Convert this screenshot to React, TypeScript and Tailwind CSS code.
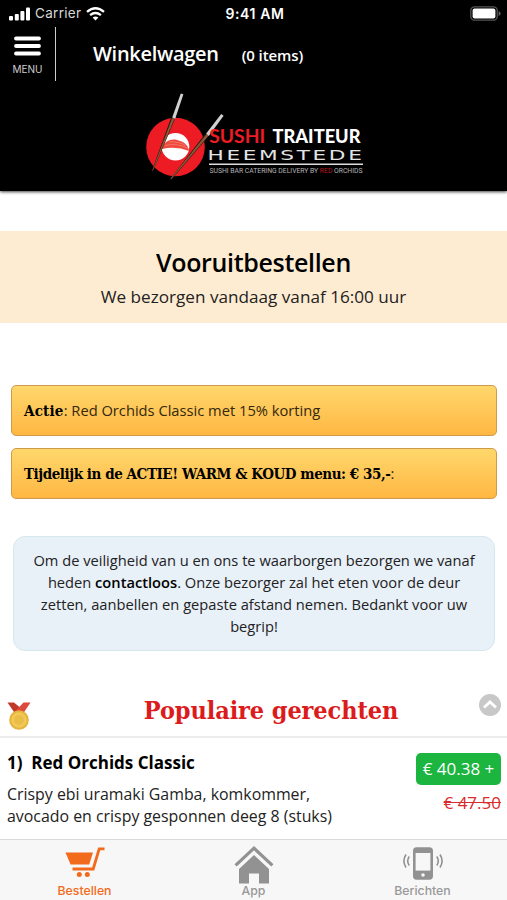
import { clsx } from "clsx";
import { ReactNode } from "react";

const tabs = [
  { id: "order", label: "Bestellen", icon: <CartIcon />, active: true },
  { id: "app", label: "App", icon: <HomeIcon />, active: false },
  { id: "messages", label: "Berichten", icon: <PhoneIcon />, active: false },
];

function CartIcon() {
  return (
    <svg width="40" height="31" viewBox="0 0 40 31" fill="#f26a1b">
      <path d="M0.5 5.5H28L24.2 17.5H5.6Z" />
      <path
        d="M39.5 1.9H34.2L28.2 22H7.5"
        fill="none"
        stroke="#f26a1b"
        strokeWidth="2.8"
      />
      <circle cx="14.3" cy="27.5" r="2.5" />
      <circle cx="22.3" cy="27.5" r="2.5" />
    </svg>
  );
}

function HomeIcon() {
  return (
    <svg className="mt-1" width="40" height="38" viewBox="0 0 40 38" fill="#929292">
      <path
        d="M1.6 19.3L20 2.2L38.4 19.3"
        fill="none"
        stroke="#929292"
        strokeWidth="3.2"
      />
      <path d="M20 9L35 23V37.5H25V27.5H15V37.5H5V23Z" />
    </svg>
  );
}

function PhoneIcon() {
  return (
    <svg className="mt-0.5" width="40" height="33" viewBox="0 0 40 33">
      <rect x="10" y="0.3" width="20" height="32.4" rx="3.6" fill="#929292" />
      <rect x="12.6" y="6" width="14.8" height="17.6" fill="#f7f7f7" />
      <circle cx="20" cy="28" r="1.8" fill="#f7f7f7" />
      <g fill="none" stroke="#929292" strokeWidth="1.6">
        <path d="M6.2 9.5Q3.2 14 6.2 18.5M3 7.5Q-1.2 14 3 20.5" />
        <path d="M33.8 9.5Q36.8 14 33.8 18.5M37 7.5Q41.2 14 37 20.5" />
      </g>
    </svg>
  );
}

function StatusBar() {
  return (
    <div className="grid h-[27px] grid-cols-3 items-center pl-[9px] pr-[6px] font-['Inter',sans-serif] text-[13.5px] leading-none">
      <div className="flex items-center">
        <svg width="22" height="14" viewBox="0 0 22 14" fill="#fff">
          <rect x="0" y="9" width="4" height="4.5" rx="1" />
          <rect x="5.8" y="7" width="4" height="6.5" rx="1" />
          <rect x="11.4" y="4" width="4" height="9.5" rx="1" />
          <rect x="17" y="0.5" width="4" height="13" rx="1" />
        </svg>
        <span className="ml-1 tracking-[0.3px] text-[#d8d8d8]">Carrier</span>
        <svg className="ml-[5px]" width="19" height="14" viewBox="0 0 19 14">
          <g fill="none" stroke="#fff" strokeWidth="2.3">
            <path d="M1 4.9Q9.5 -2.3 18 4.9" />
            <path d="M4.1 8.2Q9.5 3.8 14.9 8.2" />
          </g>
          <path d="M6.6 10.6Q9.5 8.3 12.4 10.6L9.5 13.6Z" fill="#fff" />
        </svg>
      </div>
      <span className="text-center text-[14px] font-semibold tracking-[0.6px]">9:41 AM</span>
      <svg className="justify-self-end" width="31" height="15" viewBox="0 0 31 15">
        <rect x="0.8" y="0.8" width="26.4" height="13.4" rx="3.6" fill="#000" stroke="#555" strokeWidth="1.3" />
        <rect x="2.6" y="2.6" width="22.8" height="9.8" rx="2" fill="#fff" />
        <path d="M28.6 5Q30.6 6 30.6 7.5T28.6 10Z" fill="#666" />
      </svg>
    </div>
  );
}

function Logo() {
  return (
    <svg className="ml-[143px] mt-[9px]" width="224" height="92" viewBox="143 91 224 92">
      <circle cx="175.5" cy="147" r="29.3" fill="#ed1c24" />
      <circle cx="175.5" cy="146.8" r="13.8" fill="#fff" />
      <path d="M161.8 149C164 141 171 138.5 177 140C184 141.5 188 145 189.2 151Q176 145.5 161.8 149Z" fill="#ee4a3e" />
      <path d="M165 145.5Q177 142.5 188.5 148.5M169 141.8Q179 141.5 186 145.5" fill="none" stroke="#f58476" strokeWidth="0.7" />
      {/* chopsticks: dark edge, wooden shaft, silver grip */}
      <path d="M171.2 117.5L175 118.8L152.8 171.5L151.8 171Z" fill="#2b1511" />
      <path d="M172.2 118L174.5 118.8L153 170.5L152.4 170.3Z" fill="#8a5a38" />
      <path d="M180.8 93.5L183.4 94.3L175.2 118.8L172.2 117.5Z" fill="#d0d0d0" />
      <path d="M205.5 133.5L208.8 136.3L171 180L170 179.3Z" fill="#2b1511" />
      <path d="M206.8 133.8L208.6 135.6L171.2 179.2L170.6 178.6Z" fill="#8a5a38" />
      <path d="M221.2 114L223.6 115.8L208.8 136L206.2 133.5Z" fill="#d0d0d0" />
      <text x="209.2" y="143.4" fontFamily="Lato, sans-serif" fontSize="19.4" fontWeight="700" fill="#ed1c24" textLength="56" lengthAdjust="spacingAndGlyphs">
        SUSHI
      </text>
      <text x="272.5" y="143.4" fontFamily="Lato, sans-serif" fontSize="19" fontWeight="900" fill="#fff" textLength="88" lengthAdjust="spacingAndGlyphs">
        TRAITEUR
      </text>
      <text x="207.5" y="159.8" fontFamily="DejaVu Sans, sans-serif" fontSize="14.8" letterSpacing="1.8" fill="#e4e4e4" textLength="157" lengthAdjust="spacingAndGlyphs">
        HEEMSTEDE
      </text>
      <path d="M209 164.3H363" stroke="#ddd" strokeWidth="1.4" />
      <text x="209.5" y="172.8" fontSize="6.8" fontFamily="Roboto, sans-serif" fill="#b5b5b5" textLength="153" lengthAdjust="spacing">
        SUSHI BAR CATERING DELIVERY BY <tspan fill="#b81820">RED</tspan> ORCHIDS
      </text>
    </svg>
  );
}

function Medal() {
  return (
    <svg width="24" height="28" viewBox="0 0 24 28">
      <path d="M0.5 0.5H7L16 8L13 12L8 11.5Z" fill="#c0392b" />
      <path d="M23.5 0.5H16.5L8.5 9L12 12L16.5 11Z" fill="#dc4a3c" />
      <circle cx="12" cy="18" r="9.8" fill="#e5b33c" />
      <circle cx="12" cy="18" r="7.8" fill="#f2c955" />
      <circle cx="12" cy="18" r="5" fill="#e9bd48" />
    </svg>
  );
}

function Promo({ children }: { children: ReactNode }) {
  return (
    <div className="flex h-[51px] items-center rounded-[5px] border border-[#cf9a4b] bg-linear-to-b from-[#ffd76b] to-[#ffb742] px-3 text-[#33280f]">
      <p className="whitespace-nowrap">{children}</p>
    </div>
  );
}

export default function App() {
  return (
    <div className="flex h-[900px] w-[507px] flex-col overflow-hidden bg-white font-['Open_Sans',sans-serif] text-[#222]">
      <header className="h-[191px] shrink-0 bg-black text-white shadow-[0_1px_3px_rgba(0,0,0,0.75)]">
        <StatusBar />
        <div className="flex h-[55px] items-start">
          <button className="flex h-[55px] w-[55px] flex-col items-center pt-[9px]">
            <svg width="27" height="21" viewBox="0 0 27 21">
              <path d="M2 2.5H25M2 10H25M2 17.5H25" stroke="#fff" strokeWidth="3.8" strokeLinecap="round" />
            </svg>
            <span className="mt-[7px] font-['Inter',sans-serif] text-[10px] leading-none text-[#ccc]">MENU</span>
          </button>
          <div className="h-[54px] w-px bg-[#ccc]" />
          <div className="ml-[37px] flex h-[54px] items-baseline whitespace-nowrap pt-3 font-semibold">
            <h1 className="text-[20px] tracking-[-0.3px]">Winkelwagen</h1>
            <span className="ml-[23px] text-[15px] tracking-[-0.1px]">(0 items)</span>
          </div>
        </div>
        <Logo />
      </header>

      <main className="flex-1 overflow-hidden">
        <section className="mt-10 h-[92px] bg-[#feecd2] pt-[14px] text-center">
          <h2 className="text-[25px] font-semibold leading-[34px] tracking-[-0.33px] text-black">Vooruitbestellen</h2>
          <p className="mt-1.5 text-[17.15px] leading-6">We bezorgen vandaag vanaf 16:00 uur</p>
        </section>

        <section className="mt-[62px] flex flex-col gap-3 pl-[11px] pr-[10px] text-[14.7px]">
          <Promo>
            <b className="font-['DejaVu_Serif_Condensed','DejaVu_Serif',serif] text-[15px] tracking-[0.2px] text-black">Actie</b>: Red Orchids Classic met 15% korting
          </Promo>
          <Promo>
            <b className="font-['DejaVu_Serif_Condensed','DejaVu_Serif',serif] text-[15px] tracking-[-0.44px] text-black">Tijdelijk in de ACTIE! WARM &amp; KOUD menu: € 35,-</b>:
          </Promo>
        </section>

        <section className="ml-[13px] mr-3 mt-[37px] h-[115px] rounded-xl border border-[#d5e8ee] bg-[#e8f0f8] pt-3 text-center text-[14.67px] leading-[22px]">
          Om de veiligheid van u en ons te waarborgen bezorgen we vanaf
          <br />
          heden <b className="font-semibold text-black">contactloos</b>. Onze bezorger zal het eten voor de deur
          <br />
          zetten, aanbellen en gepaste afstand nemen. Bedankt voor uw
          <br />
          begrip!
        </section>

        <section className="mt-[41px]">
          <div className="flex h-[46px] items-start border-b-2 border-[#ececec] pl-[7px] pr-[6px]">
            <div className="pt-[10px]">
              <Medal />
            </div>
            <h2 className="flex-1 whitespace-nowrap pl-8 text-center font-['DejaVu_Serif_Condensed','DejaVu_Serif',serif] text-[25px] font-bold leading-[38px] tracking-[-0.1px] text-[#dc1c1c]">
              Populaire gerechten
            </h2>
            <svg className="mt-0.5" width="22" height="22" viewBox="0 0 22 22">
              <circle cx="11" cy="11" r="11" fill="#c8c8c8" />
              <path d="M5 13.5L11 8L17 13.5" fill="none" stroke="#fff" strokeWidth="2.8" />
            </svg>
          </div>
          <div className="flex h-[102px] justify-between border-b border-[#ddd] pl-[7px] pr-[6px]">
            <div className="whitespace-nowrap pt-3">
              <h3 className="text-[17px] font-bold leading-[26px] text-black">1)&nbsp; Red Orchids Classic</h3>
              <p className="mt-[7px] text-[15.9px] leading-[22px]">
                Crispy ebi uramaki Gamba, komkommer,
                <br />
                avocado en crispy gesponnen deeg 8 (stuks)
              </p>
            </div>
            <div className="flex flex-col items-end pt-[15px]">
              <button className="h-8 w-[85px] whitespace-nowrap rounded-[5px] bg-[#1bb53f] text-[17px] leading-8 text-white">
                € 40.38 +
              </button>
              <s className="mt-1.5 text-[17px] leading-6 text-[#d92b2b]">€ 47.50</s>
            </div>
          </div>
        </section>
      </main>

      <nav className="grid h-[61px] shrink-0 grid-cols-3 border-t border-[#d9d9d9] bg-[#f7f7f7] font-['Inter',sans-serif]">
        {tabs.map((tab) => (
          <button
            key={tab.id}
            className={clsx(
              "flex flex-col items-center text-[12.3px] font-medium leading-none",
              tab.active ? "text-[#f26a1b]" : "text-[#999]"
            )}
          >
            <span className="flex h-[45px] items-center">{tab.icon}</span>
            <span>{tab.label}</span>
          </button>
        ))}
      </nav>
    </div>
  );
}
